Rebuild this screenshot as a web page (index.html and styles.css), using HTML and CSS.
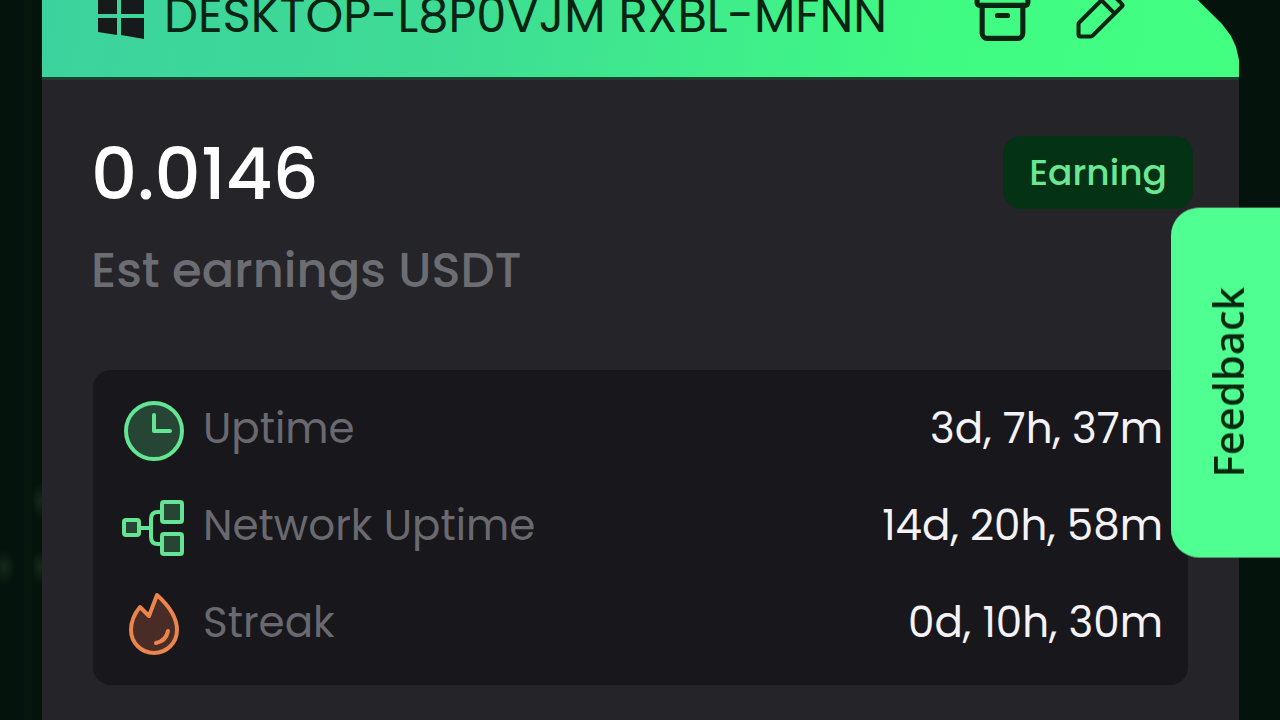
FILE: index.html
```html
<!DOCTYPE html>
<html lang="en">
<head>
    <meta charset="UTF-8">
    <meta name="viewport" content="width=device-width, initial-scale=1.0">
    <title>Device earnings</title>
    <link rel="stylesheet" href="styles.css">
</head>
<body>
    <main class="device-card">
        <header class="device-header">
            <svg class="os-icon" viewBox="0 0 46 46" aria-hidden="true">
                <path d="M0 6 19 3v18H0zM23 3 46 0v21H23zM0 25h19v17L0 39zM23 25h23v21l-23-4z"/>
            </svg>
            <h1 class="device-name">DESKTOP-L8P0VJM RXBL-MFNN</h1>
            <div class="device-actions">
                <button class="icon-button" type="button" aria-label="Archive">
                    <svg viewBox="0 0 24 24">
                        <rect x="2" y="3" width="20" height="5" rx="1"/>
                        <path d="M4 8v11a2 2 0 0 0 2 2h12a2 2 0 0 0 2-2V8M10 12h4"/>
                    </svg>
                </button>
                <button class="icon-button" type="button" aria-label="Rename">
                    <svg class="pencil" viewBox="0 0 256 256">
                        <path d="M92.7 216H48a8 8 0 0 1-8-8v-44.7a8 8 0 0 1 2.3-5.6L165.7 34.3a8 8 0 0 1 11.3 0L221.7 79a8 8 0 0 1 0 11.3L98.3 213.7a8 8 0 0 1-5.6 2.3zM136 64l56 56"/>
                    </svg>
                </button>
            </div>
        </header>

        <section class="summary">
            <div>
                <p class="amount">0.0146</p>
                <p class="amount-label">Est earnings USDT</p>
            </div>
            <span class="badge">Earning</span>
        </section>

        <dl class="stats">
            <div class="stat">
                <svg class="stat-icon" viewBox="0 0 64 64" aria-hidden="true">
                    <circle cx="32" cy="33" r="28"/>
                    <path class="open" d="M32 17v16h16"/>
                </svg>
                <dt>Uptime</dt>
                <dd>3d, 7h, 37m</dd>
            </div>
            <div class="stat">
                <svg class="stat-icon" viewBox="0 0 64 64" aria-hidden="true">
                    <rect x="2" y="25" width="15" height="15" rx="2"/>
                    <rect x="40" y="7" width="20" height="20" rx="2"/>
                    <rect x="40" y="39" width="20" height="20" rx="2"/>
                    <path class="open" d="M17 33h12M40 17h-4q-7 0-7 7v18q0 7 7 7h4"/>
                </svg>
                <dt>Network Uptime</dt>
                <dd>14d, 20h, 58m</dd>
            </div>
            <div class="stat">
                <svg class="stat-icon flame" viewBox="0 0 64 64" aria-hidden="true">
                    <path d="M35 3C45 12 55 25 55 38a23 23 0 0 1-46 0c0-9 4-17 9-23l9 9z"/>
                    <path class="open" d="M46 39q-2 10-12 12"/>
                </svg>
                <dt>Streak</dt>
                <dd>0d, 10h, 30m</dd>
            </div>
        </dl>
    </main>

    <button class="feedback" type="button">Feedback</button>
</body>
</html>
```
FILE: styles.css
```css
* {
    box-sizing: border-box;
}
body {
    margin: 0;
    min-height: 100vh;
    display: flex;
    overflow: hidden;
    font-family: Poppins, Inter, sans-serif;
    color: #fff;
    background-color: #04130b;
    background-image:
        radial-gradient(ellipse 9px 18px at 40px 501px, #15291a, transparent),
        radial-gradient(ellipse 12px 18px at 4px 567px, #15291a, transparent),
        radial-gradient(ellipse 9px 18px at 40px 567px, #15291a, transparent),
        linear-gradient(90deg, transparent 24px, #07170e 24px, #07170e 32px, transparent 32px);
}
.device-card {
    flex: 1;
    /* header is scrolled partly out of view */
    margin: -46px 41px 0 42px;
    background: linear-gradient(#252428, #252428) no-repeat 0 122px;
}
.device-header {
    display: flex;
    align-items: center;
    height: 123px;
    padding: 0 109px 0 56px;
    color: #0a2413;
    background: linear-gradient(100deg, #3cd29e 0%, #3edc94 35%, #40fb83 75%, #42ff82 100%);
    clip-path: polygon(0 0, calc(100% - 88px) 0, calc(100% - 17px) 70px, calc(100% - 8px) 82px, calc(100% - 3px) 93px, 100% 106px, 100% 100%, 0 100%);
}
.os-icon {
    width: 46px;
    height: 46px;
    fill: #161a1a;
}
.device-name {
    flex: 1;
    margin: 0 0 0 20px;
    font-size: 48px;
    font-weight: 400;
    white-space: nowrap;
}
.device-actions {
    display: flex;
    gap: 36px;
}
.icon-button {
    width: 61px;
    height: 61px;
    padding: 0;
    border: none;
    background: none;
    color: inherit;
    cursor: pointer;
}
.icon-button svg {
    display: block;
    fill: none;
    stroke: currentColor;
    stroke-width: 2;
    stroke-linecap: round;
    stroke-linejoin: round;
}
.icon-button .pencil {
    stroke-width: 17;
}
.summary {
    display: flex;
    justify-content: space-between;
    align-items: flex-start;
    padding: 56px 46px 0 49px;
    border-top: 3px solid #1d4030;
}
.amount {
    margin: 0;
    font-size: 72px;
    line-height: 76px;
    font-weight: 500;
}
.amount-label {
    margin: 29px 0 0;
    font-size: 48px;
    line-height: 60px;
    font-weight: 500;
    color: #6c6d73;
}
.badge {
    padding: 0 26px;
    border-radius: 18px;
    font-size: 36px;
    line-height: 73px;
    font-weight: 500;
    color: #6be793;
    background: #043214;
}
.stats {
    display: flex;
    flex-direction: column;
    gap: 33px;
    margin: 69px 51px 36px;
    padding: 28px 25px 29px 29px;
    border-radius: 18px;
    background: #18171b;
}
.stat {
    display: flex;
    align-items: center;
    height: 64px;
    font-size: 42px;
}
.stat-icon {
    width: 64px;
    height: 64px;
    margin-right: 17px;
    fill: #264534;
    stroke: #63e594;
    stroke-width: 4;
    stroke-linecap: round;
    stroke-linejoin: round;
}
.stat-icon.flame {
    fill: #482c25;
    stroke: #e9854d;
}
.stat-icon .open {
    fill: none;
}
.stat dt,
.stat dd {
    padding-bottom: 4px;
}
.stat dt {
    color: #69696f;
}
.stat dd {
    margin: 0 0 0 auto;
    color: #f3f2f6;
}
.feedback {
    position: fixed;
    top: 208px;
    right: 0;
    padding: 79px 28px 78px 24px;
    border: 1px solid #6ce797;
    border-right: none;
    border-left: none;
    border-radius: 0 28px 28px 0;
    font-family: "Noto Sans", sans-serif;
    font-size: 42px;
    font-weight: 500;
    line-height: 57px;
    color: #06280f;
    background: #50ff92;
    writing-mode: vertical-rl;
    transform: rotate(180deg);
    cursor: pointer;
}
```
